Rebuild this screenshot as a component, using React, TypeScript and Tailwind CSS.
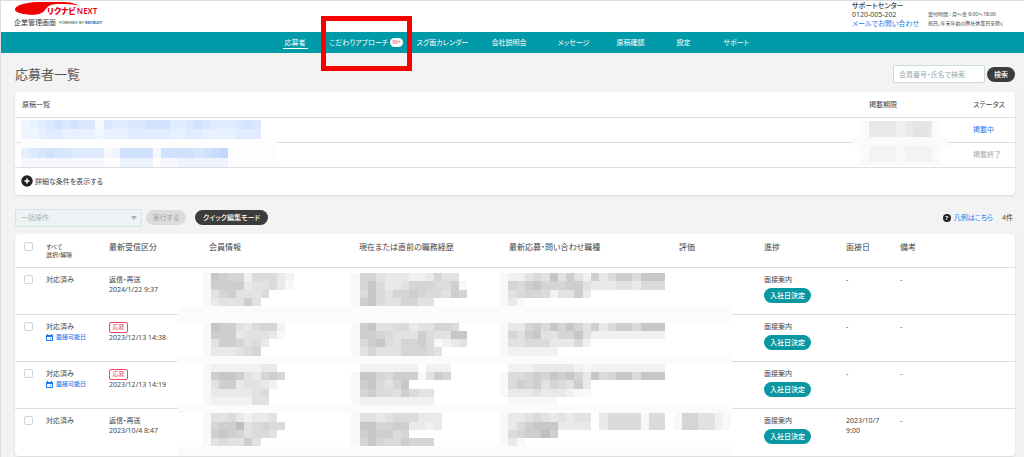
import { CirclePlus } from "lucide-react";

type NavItem = { label: string; active?: boolean; badge?: string };

type Applicant = {
  status: string;
  interviewOpen?: boolean;
  kind: string;
  isNew?: boolean;
  receivedAt: string;
  interviewDate: string;
};

type MosaicRun = [row: number, col: number, shades: string];

const navItems: NavItem[] = [
  { label: "応募者", active: true },
  { label: "こだわりアプローチ", badge: "99+" },
  { label: "スグ面カレンダー" },
  { label: "会社説明会" },
  { label: "メッセージ" },
  { label: "原稿確認" },
  { label: "設定" },
  { label: "サポート" },
];

const applicants: Applicant[] = [
  { status: "対応済み", kind: "返信・再送", receivedAt: "2024/1/22 9:37", interviewDate: "-" },
  { status: "対応済み", interviewOpen: true, kind: "応募", isNew: true, receivedAt: "2023/12/13 14:38", interviewDate: "-" },
  { status: "対応済み", interviewOpen: true, kind: "応募", isNew: true, receivedAt: "2023/12/13 14:19", interviewDate: "-" },
  { status: "対応済み", kind: "返信・再送", receivedAt: "2023/10/4 8:47", interviewDate: "2023/10/7 9:00" },
];

// Masked personal data: each digit is the darkness of one tile.
const applicantMask: MosaicRun[] = [
  [0, 3, "18766255532"], [0, 21, "1664333223644"], [0, 39, "12245484742735775888"],
  [1, 3, "17777344531"], [1, 21, "16853346665571"], [1, 39, "16578666774333443555"],
  [2, 3, "14674445"], [2, 21, "15854667655476"], [2, 39, "14566524473"],
  [3, 3, "1344474"], [3, 21, "1785446644"], [3, 39, "131"],
  [6, 3, "1877435662"], [6, 21, "1784455344665"], [6, 39, "13367586864735775888"],
  [7, 3, "1777344431"], [7, 21, "17765444754488"], [7, 39, "16478446684222222222"],
  [8, 3, "14776453"], [8, 21, "15785466751234"], [8, 39, "14455533352"],
  [9, 3, "1333456"], [9, 21, "14644466654"], [9, 39, "1222222"],
  [11, 3, "122222233"], [11, 21, "022222220222"], [11, 39, "02223333321222222222"],
  [12, 3, "1788743676"], [12, 21, "188657771476"], [12, 39, "15567687863856885888"],
  [13, 3, "147734432"], [13, 21, "1785468"], [13, 39, "15767465473"],
  [14, 3, "13333345"], [14, 21, "1675547544"], [14, 39, "13334333211"],
  [15, 3, "12222244"], [15, 21, "1222222222"], [15, 39, "0111111"],
  [17, 3, "144532334"], [17, 21, "14434555333"], [17, 39, "1334543434403555515501664421"],
  [18, 3, "1677945655"], [18, 21, "18866773323"], [18, 39, "1357888333303555515501664421"],
  [19, 3, "178764554"], [19, 21, "1787756"], [19, 39, "1567797"],
  [20, 3, "1454474"], [20, 21, "1686557666"], [20, 39, "131"],
];

const postingMask: MosaicRun[] = [
  [0, 0, "23456565515445566644565444565"],
  [1, 0, "22344333323334444433443333444"],
  [3, 0, "3456554444126666166665678"],
  [4, 0, "1111111111002222011222222"],
];

function Mosaic({ runs, tile, height, color }: { runs: MosaicRun[]; tile: number; height: number; color: string }) {
  return (
    <g fill={color} shapeRendering="crispEdges">
      {runs.flatMap(([row, col, shades]) =>
        [...shades].map((shade, i) => (
          <rect
            key={`${row}-${col}-${i}`}
            x={(col + i) * tile}
            y={row * height}
            width={tile}
            height={height}
            fillOpacity={Number(shade) * 0.036}
          />
        )),
      )}
    </g>
  );
}

function Logo() {
  return (
    <div>
      <div className="relative flex h-4 items-center pl-[33px] pt-[3px] leading-none text-[#e60012]">
        <svg className="absolute left-0 top-0 h-4 w-20" viewBox="0 0 80 16" aria-hidden="true">
          <path
            d="M1 9C0 5.500 9 1.300 24 1L48 1C56 1.200 61 2.200 65 4.600C59 3.400 51 3 43 3.100C36 3.400 34 5.500 31 9C28 13 23 14 16 13.700C8 13.200 2 11.500 1 9Z"
            fill="#f00000"
          />
        </svg>
        <span className="text-[8px] font-black">リクナビ</span>
        <span className="pl-px text-[8px] font-semibold">NEXT</span>
      </div>
      <div className="flex items-center gap-[3px] leading-[11px]">
        <span>企業管理画面</span>
        <span className="text-[4px]">
          POWERED BY <span className="font-bold text-[#0068b7]">RECRUIT</span>
        </span>
      </div>
    </div>
  );
}

function Header() {
  return (
    <header className="flex h-[31px] justify-between bg-white pl-[13px] pr-3">
      <Logo />
      <div className="grid grid-cols-[76px_84px] leading-[9px]">
        <div>
          <p className="font-medium">サポートセンター</p>
          <p>0120-005-202</p>
          <a href="#contact" className="block text-[#1a7cf0]">メールでお問い合わせ</a>
        </div>
        <div className="pt-[9px] text-[5px]">
          <p>受付時間 : 月～金 9:00～18:00</p>
          <p>祝日、年末年始の弊社休業日を除く</p>
        </div>
      </div>
    </header>
  );
}

function Nav() {
  return (
    <nav className="grid h-[21px] grid-cols-[36px_96px_75px_66px_59px_60px_47px_21px] items-center justify-center bg-[#009aa8] pl-1 text-white">
      {navItems.map((item) => (
        <a
          key={item.label}
          href="#nav"
          className={
            item.badge
              ? "relative flex h-full w-[91px] items-center justify-center gap-[2px] whitespace-nowrap"
              : "justify-self-start whitespace-nowrap"
          }
        >
          <span className={item.active ? "-mx-[2px] block border-b border-white px-[2px] leading-[11px]" : "leading-[11px]"}>
            {item.label}
          </span>
          {item.badge && (
            <>
              <span className="rounded-full bg-white px-[2px] text-[5px] leading-[9px] text-[#e8476a]">
                {item.badge}
              </span>
              <span className="pointer-events-none absolute inset-x-0 -bottom-[18px] -top-4 border-[5px] border-[#f60000]" />
            </>
          )}
        </a>
      ))}
    </nav>
  );
}

function Postings() {
  return (
    <section className="relative rounded-sm bg-white shadow">
      <table className="w-full table-fixed text-left">
        <colgroup>
          <col />
          <col className="w-[104px]" />
          <col className="w-[42px]" />
        </colgroup>
        <thead>
          <tr className="h-[25px] border-b border-[#dedede]">
            <th className="pl-[7px] font-normal">原稿一覧</th>
            <th className="font-normal">掲載期限</th>
            <th className="font-normal">ステータス</th>
          </tr>
        </thead>
        <tbody>
          <tr className="h-[25px] border-b border-[#dedede]">
            <td />
            <td />
            <td><a href="#posting" className="text-[#1a7cf0]">掲載中</a></td>
          </tr>
          <tr className="h-[25px] border-b border-[#dedede]">
            <td />
            <td />
            <td className="text-[#a8a8a8]">掲載終了</td>
          </tr>
        </tbody>
      </table>
      <svg className="absolute left-[6px] top-7 h-[47px] w-64" viewBox="0 0 256 47" aria-hidden="true">
        <rect y="18" width="256" height="29" fill="#fdfdfd" />
        <Mosaic runs={postingMask} tile={8.26} height={9.4} color="#2b7fff" />
      </svg>
      <svg className="absolute right-[66px] top-7 h-[46px] w-[97px]" viewBox="0 0 97 46" aria-hidden="true">
        <rect y="18" width="97" height="8" fill="#fafafa" />
        <rect x="8" y="1" width="80" height="44" fill="#fafafa" />
        <path d="M17 1h63v16H17z" fill="#e9e9e9" />
        <path d="M44 1h9v16h-9z" fill="#f0f0f0" />
        <path d="M61 1h16v16H61z" fill="#e4e4e4" />
        <path d="M17 26h63v16H17z" fill="#f3f3f3" />
        <path d="M44 26h9v16h-9z" fill="#f8f8f8" />
      </svg>
      <button type="button" className="flex h-[27px] items-center gap-[2px] pl-[6px]">
        <CirclePlus className="size-3 fill-[#222] text-[#222] [&>path]:stroke-white" strokeWidth={3} aria-hidden="true" />
        詳細な条件を表示する
      </button>
    </section>
  );
}

function Toolbar() {
  return (
    <div className="mt-[14px] flex h-[18px] items-center">
      <div className="relative">
        <select
          aria-label="一括操作"
          disabled
          className="block h-[18px] w-[127px] appearance-none rounded-xs border border-[#d3e3e6] bg-[#edf3f4] pl-[5px] text-[#a6b1b3] opacity-100"
        >
          <option>一括操作</option>
        </select>
        <svg className="absolute right-[5px] top-[7px] h-1 w-[6px]" viewBox="0 0 6 4" aria-hidden="true">
          <path d="M0 0h6L3 4z" fill="#a9b6b9" />
        </svg>
      </div>
      <button type="button" disabled className="ml-1 h-[15px] w-10 rounded-full bg-[#dcdcdc] text-[#a3a3a3]">
        実行する
      </button>
      <button type="button" className="ml-[9px] h-[15px] w-[73px] rounded-full bg-[#3c3c3c] font-medium text-white">
        クイック編集モード
      </button>
      <div className="ml-auto flex items-center gap-[3px] pr-[2px]">
        <span className="size-2 rounded-full bg-[#222] text-center text-[6px] font-bold leading-[8px] text-white">?</span>
        <a href="#legend" className="text-[#1a7cf0]">凡例はこちら</a>
        <span className="pl-[6px]">4件</span>
      </div>
    </div>
  );
}

const checkboxClass =
  "block size-[9px] appearance-none rounded-xs border border-[#c9d8dc] bg-white checked:bg-[#009aa8]";

function ApplicantRow({ applicant }: { applicant: Applicant }) {
  return (
    <tr className="h-[47px] border-b border-[#dedede] align-top leading-[10px] last:border-b-0">
      <td className="pl-[9px] pt-[7px]">
        <input type="checkbox" aria-label="応募者を選択" className={checkboxClass} />
      </td>
      <td className="pt-[7px]">
        <p>{applicant.status}</p>
        {applicant.interviewOpen && (
          <a href="#interview" className="flex items-center gap-[3px] text-[6px] font-medium text-[#1a7cf0]">
            <svg className="size-[7px]" viewBox="0 0 7 7" aria-hidden="true">
              <path d="M1 0h1v1h3V0h1v1h1v6H0V1h1zM1 3v3h5V3z" fill="currentColor" fillRule="evenodd" />
              <path d="M4 4h1v1H4z" fill="currentColor" />
            </svg>
            面接可能日
          </a>
        )}
      </td>
      <td className="pt-[7px]">
        {applicant.isNew ? (
          <span className="block h-[11px] w-[19px] rounded-xs border border-[#e8476a] text-center text-[6px] leading-[9px] text-[#e8476a]">
            {applicant.kind}
          </span>
        ) : (
          <p>{applicant.kind}</p>
        )}
        <p>{applicant.receivedAt}</p>
      </td>
      <td />
      <td />
      <td />
      <td />
      <td className="pt-[7px]">
        <p>面接案内</p>
        <button type="button" className="mt-[3px] block h-[15px] w-[47px] rounded-full bg-[#0997a2] font-medium text-white">
          入社日決定
        </button>
      </td>
      <td className="pr-4 pt-[7px]">{applicant.interviewDate}</td>
      <td className="pt-[7px]">-</td>
    </tr>
  );
}

function Applicants() {
  return (
    <section className="relative mt-[7px] rounded-sm bg-white shadow">
      <table className="w-full table-fixed text-left">
        <colgroup>
          <col className="w-[31px]" />
          <col className="w-[63px]" />
          <col className="w-[100px]" />
          <col className="w-[150px]" />
          <col className="w-[150px]" />
          <col className="w-[170px]" />
          <col className="w-[85px]" />
          <col className="w-[82px]" />
          <col className="w-[54px]" />
          <col />
        </colgroup>
        <thead>
          <tr className="h-[34px] border-b border-[#dedede] align-top text-[8px] leading-[10px]">
            <th className="pl-[9px] pt-2">
              <input id="select-all" type="checkbox" aria-label="すべて選択/解除" className={checkboxClass} />
            </th>
            <th className="pt-[9px] text-[6px] font-normal leading-[8px]">
              <label htmlFor="select-all">すべて<br />選択/解除</label>
            </th>
            <th className="pt-2 font-normal">最新受信区分</th>
            <th className="pt-2 font-normal">会員情報</th>
            <th className="pt-2 font-normal">現在または直前の職務経歴</th>
            <th className="pt-2 font-normal">最新応募・問い合わせ職種</th>
            <th className="pt-2 font-normal">評価</th>
            <th className="pt-2 font-normal">進捗</th>
            <th className="whitespace-nowrap pt-2 font-normal">面接日</th>
            <th className="pt-2 font-normal">備考</th>
          </tr>
        </thead>
        <tbody>
          {applicants.map((applicant) => (
            <ApplicantRow key={applicant.receivedAt} applicant={applicant} />
          ))}
        </tbody>
      </table>
      <svg className="absolute left-[163px] top-[39px] h-[184px] w-[554px]" viewBox="0 0 554 184" aria-hidden="true">
        <path d="M0 33h554v17H0zM0 83h554v8H0zM0 132h554v8H0zM0 174h554v8H0z" fill="#fbfbfb" />
        <Mosaic runs={applicantMask} tile={8.26} height={8.26} color="#3a3a40" />
      </svg>
    </section>
  );
}

export default function App() {
  return (
    <div className="min-h-screen border-l border-t border-[#dcdcdc] bg-[#f3f3f3] font-['Noto_Sans','Noto_Sans_CJK_JP',sans-serif] text-[7px] leading-[9px] text-[#444] [font-feature-settings:'palt']">
      <Header />
      <Nav />
      <main className="pl-[14px] pr-[9px] pt-3">
        <div className="mb-[9px] flex h-[18px] items-center justify-between">
          <h1 className="text-[13px] leading-[18px] text-[#555]">応募者一覧</h1>
          <form className="flex items-center gap-[2px]">
            <input
              type="search"
              aria-label="会員番号・氏名で検索"
              placeholder="会員番号・氏名で検索"
              className="h-[18px] w-[92px] rounded-xs border border-[#c9dbe0] bg-white px-[5px] placeholder:text-[#9aabb0]"
            />
            <button type="button" className="h-[15px] w-7 rounded-full bg-[#3c3c3c] font-medium text-white">
              検索
            </button>
          </form>
        </div>
        <Postings />
        <Toolbar />
        <Applicants />
      </main>
    </div>
  );
}
